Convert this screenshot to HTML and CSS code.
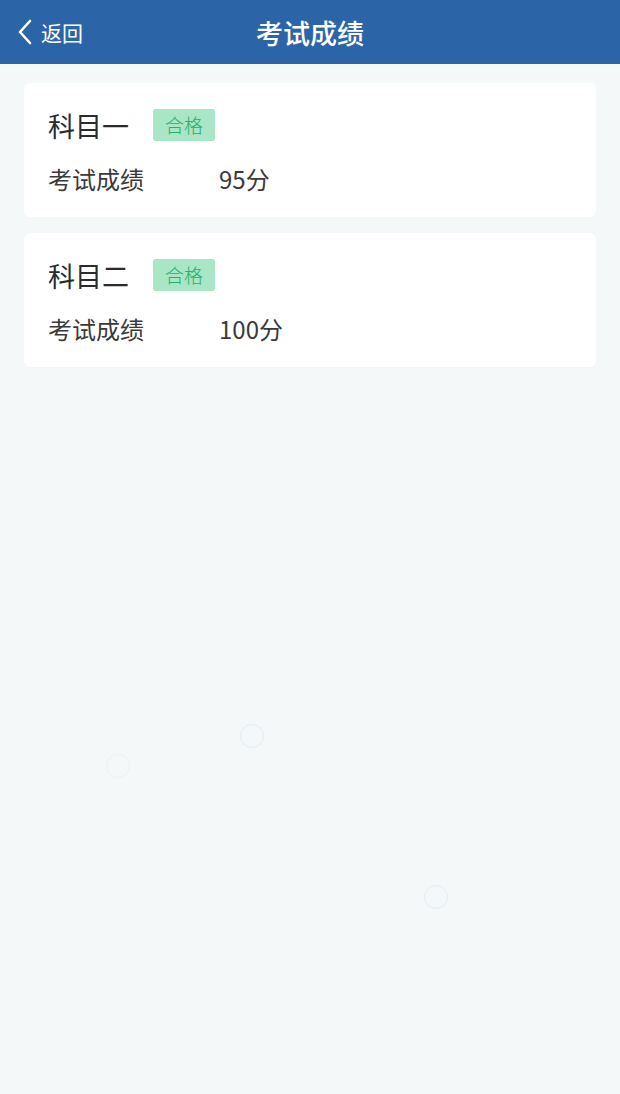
FILE: index.html
```html
<!DOCTYPE html>
<html lang="zh-CN">
<head>
    <meta charset="UTF-8">
    <meta name="viewport" content="width=device-width, initial-scale=1.0">
    <title>考试成绩</title>
    <link rel="stylesheet" href="styles.css">
</head>
<body>

<header class="topbar">
    <a class="back" href="#">
        <svg class="back-icon" viewBox="0 0 16 28" width="16" height="28">
            <path d="M13 3 L3 14 L13 25" fill="none" stroke="#fff" stroke-width="2.6" stroke-linecap="round" stroke-linejoin="round"/>
        </svg>
        <span>返回</span>
    </a>
    <h1>考试成绩</h1>
</header>

<main class="list">
    <section class="card">
        <div class="card-head">
            <h2>科目一</h2>
            <span class="badge">合格</span>
        </div>
        <div class="row">
            <span class="label">考试成绩</span>
            <span class="value">95分</span>
        </div>
    </section>

    <section class="card">
        <div class="card-head">
            <h2>科目二</h2>
            <span class="badge">合格</span>
        </div>
        <div class="row">
            <span class="label">考试成绩</span>
            <span class="value">100分</span>
        </div>
    </section>
</main>

<!-- faint loading rings left over on the page -->
<div class="ring ring-a"></div>
<div class="ring ring-b"></div>
<div class="ring ring-c"></div>

</body>
</html>
```

FILE: styles.css
```css
body {
    font-family: "Noto Sans CJK SC", "Noto Sans", sans-serif;
    margin: 0;
    padding: 0;
    background-color: #f4f8f9;
    color: #333;
    min-height: 1094px;
    position: relative;
}

.topbar {
    height: 64px;
    background-color: #2c64a8;
    display: flex;
    align-items: center;
    justify-content: center;
    position: relative;
    color: #fff;
}

.topbar h1 {
    margin: 0;
    font-size: 27px;
    font-weight: 500;
    line-height: 1;
}

.back {
    position: absolute;
    left: 17px;
    top: 0;
    height: 64px;
    display: flex;
    align-items: center;
    gap: 8px;
    color: #fff;
    text-decoration: none;
    font-size: 21px;
}

.back-icon {
    display: block;
}

.list {
    padding: 19px 24px;
    display: flex;
    flex-direction: column;
    gap: 16px;
}

.card {
    background-color: #fff;
    border-radius: 6px;
    height: 134px;
    box-sizing: border-box;
    padding: 26px 24px 0;
}

.card-head {
    display: flex;
    align-items: center;
    gap: 24px;
    height: 32px;
}

.card-head h2 {
    margin: 0;
    font-size: 27px;
    font-weight: 400;
    color: #2b2b2b;
    line-height: 1;
}

.badge {
    background-color: #a9e6c6;
    color: #2aad67;
    font-size: 19px;
    font-weight: 300;
    line-height: 32px;
    height: 32px;
    padding: 0 12px;
    border-radius: 3px;
}

.row {
    display: flex;
    align-items: center;
    margin-top: 26px;
    font-size: 24px;
    color: #3a3a3a;
    line-height: 1;
}

.label {
    width: 171px;
}

.ring {
    position: absolute;
    width: 22px;
    height: 22px;
    border: 1.5px solid #e4ebf7;
    border-radius: 50%;
}

.ring-a {
    left: 106px;
    top: 754px;
    border-color: #edf1f8;
}

.ring-b {
    left: 240px;
    top: 724px;
}

.ring-c {
    left: 424px;
    top: 885px;
}
```
